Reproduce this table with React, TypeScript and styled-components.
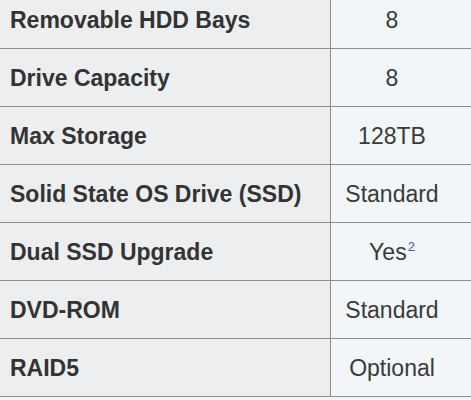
import React from "react";
import styled, { createGlobalStyle } from "styled-components";

const Global = createGlobalStyle`
  html, body { margin: 0; padding: 0; background: #f3f6f9; overflow: hidden; }
  body { font-family: "Liberation Sans", Arial, sans-serif; }
`;

const Table = styled.div`
  display: grid;
  grid-template-columns: 330px 1px 140px;
  margin-top: -9px;
  width: 471px;
`;

const Row = styled.div`
  display: contents;
`;

const Label = styled.div`
  box-sizing: border-box;
  height: 58px;
  padding-top: 1px;
  padding-left: 10px;
  border-bottom: 1px solid #8d8d8d;
  background: #eceef0;
  display: flex;
  align-items: center;
  font-weight: bold;
  font-size: 23px;
  color: #333;
`;

const Divider = styled.div`
  background: #8d8d8d;
`;

const Value = styled.div`
  box-sizing: border-box;
  height: 58px;
  padding-top: 1px;
  padding-right: 18px;
  border-bottom: 1px solid #8d8d8d;
  background: #f3f6f9;
  display: flex;
  align-items: center;
  justify-content: center;
  font-size: 23px;
  color: #3a3a3a;
`;

const ValueText = styled.span`
  line-height: 1;
`;

const Sup = styled.sup`
  font-size: 13px;
  color: #3d5f9a;
  vertical-align: 9px;
  line-height: 0;
  margin-left: 1px;
`;

const rows: { label: string; value: string; sup?: string }[] = [
  { label: "Removable HDD Bays", value: "8" },
  { label: "Drive Capacity", value: "8" },
  { label: "Max Storage", value: "128TB" },
  { label: "Solid State OS Drive (SSD)", value: "Standard" },
  { label: "Dual SSD Upgrade", value: "Yes", sup: "2" },
  { label: "DVD-ROM", value: "Standard" },
  { label: "RAID5", value: "Optional" },
];

export default function App() {
  return (
    <>
      <Global />
      <Table>
        {rows.map((r) => (
          <Row key={r.label}>
            <Label>{r.label}</Label>
            <Divider />
            <Value>
              <ValueText>
                {r.value}
                {r.sup && <Sup>{r.sup}</Sup>}
              </ValueText>
            </Value>
          </Row>
        ))}
      </Table>
    </>
  );
}
